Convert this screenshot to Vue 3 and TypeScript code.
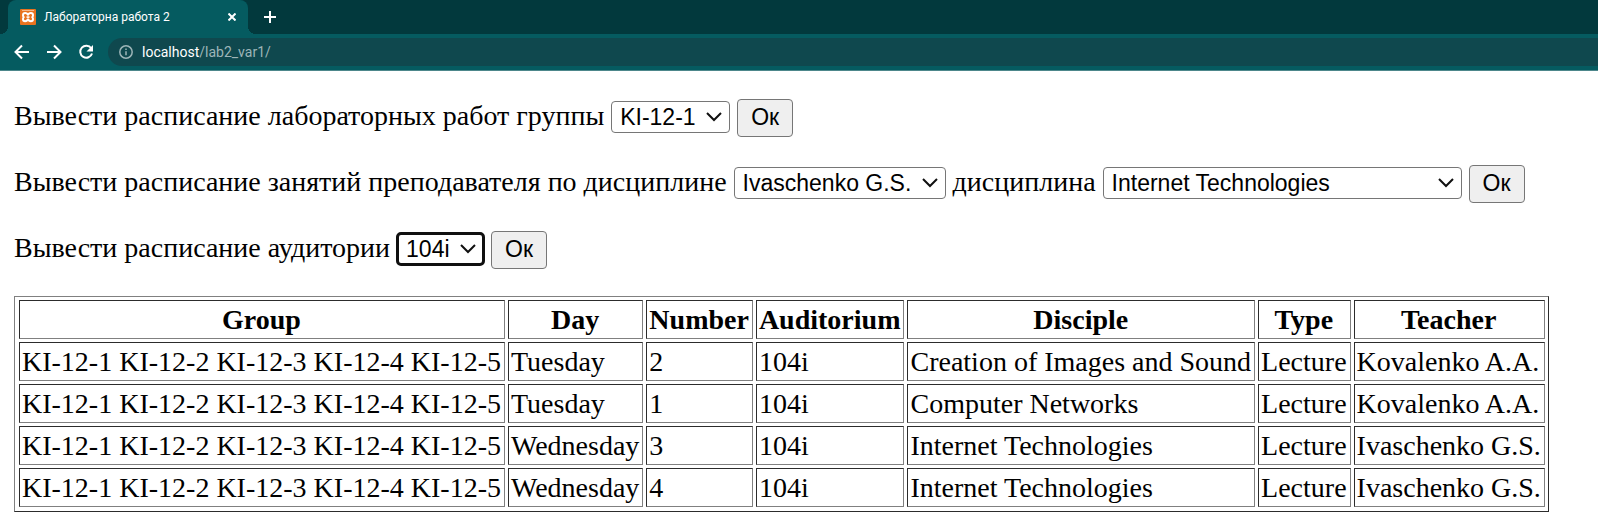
<script setup lang="ts">
import { ref } from 'vue'

interface Lesson {
  group: string
  day: string
  number: number
  auditorium: string
  disciple: string
  type: string
  teacher: string
}

const groups = ['KI-12-1', 'KI-12-2', 'KI-12-3', 'KI-12-4', 'KI-12-5']
const teachers = ['Ivaschenko G.S.', 'Kovalenko A.A.']
const disciplines = ['Internet Technologies', 'Computer Networks', 'Creation of Images and Sound']
const rooms = ['104i']

const group = ref(groups[0])
const teacher = ref(teachers[0])
const discipline = ref(disciplines[0])
const room = ref(rooms[0])

const columns = ['Group', 'Day', 'Number', 'Auditorium', 'Disciple', 'Type', 'Teacher']
const allGroups = groups.join(' ')

const lessons: Lesson[] = [
  { group: allGroups, day: 'Tuesday', number: 2, auditorium: '104i', disciple: 'Creation of Images and Sound', type: 'Lecture', teacher: 'Kovalenko A.A.' },
  { group: allGroups, day: 'Tuesday', number: 1, auditorium: '104i', disciple: 'Computer Networks', type: 'Lecture', teacher: 'Kovalenko A.A.' },
  { group: allGroups, day: 'Wednesday', number: 3, auditorium: '104i', disciple: 'Internet Technologies', type: 'Lecture', teacher: 'Ivaschenko G.S.' },
  { group: allGroups, day: 'Wednesday', number: 4, auditorium: '104i', disciple: 'Internet Technologies', type: 'Lecture', teacher: 'Ivaschenko G.S.' },
]
</script>

<template>
  <div class="browser">
    <header>
      <div class="tabs">
        <div class="tab">
          <svg class="favicon" viewBox="0 0 16 16" aria-hidden="true">
            <rect width="16" height="16" rx="1" fill="#e8731f" />
            <path d="M2 1.500h12" stroke="#f6b98a" stroke-width="1" />
            <path
              d="M8 5.800C7.200 4.600 6.300 4 5.200 4 3.800 4 3 5 3 6.200c0 .8.300 1.400.8 1.900-.5.500-.8 1.100-.8 1.900C3 11.200 3.800 12.200 5.200 12.200c1.100 0 2-.6 2.800-1.800.8 1.200 1.700 1.800 2.800 1.800 1.400 0 2.200-1 2.200-2.200 0-.8-.3-1.400-.8-1.900.5-.5.8-1.100.8-1.900C13 5 12.200 4 10.800 4 9.700 4 8.800 4.600 8 5.800Z"
              fill="none" stroke="#fff" stroke-width="2" stroke-linejoin="round" />
            <path d="M6.500 8.100h3" stroke="#fff" stroke-width="1.600" />
          </svg>
          <span class="title">Лабораторна работа 2</span>
          <button class="icon close" type="button" aria-label="Close tab">
            <svg viewBox="0 0 8 8"><path d="M.5.5l7 7M7.500.5l-7 7" /></svg>
          </button>
        </div>
        <button class="icon add" type="button" aria-label="New tab">
          <svg viewBox="0 0 12 12"><path d="M6 0v12M0 6h12" /></svg>
        </button>
      </div>
      <div class="toolbar">
        <nav class="history">
          <button class="icon" type="button" aria-label="Back">
            <svg viewBox="0 0 16 16"><path d="M15 8H2M8 1.500 1.500 8 8 14.500" /></svg>
          </button>
          <button class="icon" type="button" aria-label="Forward">
            <svg viewBox="0 0 16 16"><path d="M1 8h13M8 1.500 14.500 8 8 14.500" /></svg>
          </button>
          <button class="icon" type="button" aria-label="Reload">
            <svg viewBox="0 0 16 16">
              <path d="M13.200 4.300A6 6 0 1 0 14 9.500" />
              <path class="solid" d="M15 1v6.500H8.500Z" />
            </svg>
          </button>
        </nav>
        <div class="omnibox">
          <svg class="info" viewBox="0 0 14 14" aria-hidden="true">
            <circle cx="7" cy="7" r="6.200" />
            <path d="M7 6.200v4M7 3.500v1.500" />
          </svg>
          <a href="#">localhost<span>/lab2_var1/</span></a>
        </div>
      </div>
    </header>

    <main>
      <form @submit.prevent>
        <label for="group">Вывести расписание лабораторных работ группы</label>
        <span class="pick">
          <select id="group" v-model="group">
            <option v-for="g in groups" :key="g">{{ g }}</option>
          </select>
          <svg viewBox="0 0 16 10" aria-hidden="true"><path d="M1 1l7 7 7-7" /></svg>
        </span>
        <button class="ok" type="submit">Ок</button>
      </form>

      <form @submit.prevent>
        <label for="teacher">Вывести расписание занятий преподавателя по дисциплине</label>
        <span class="pick">
          <select id="teacher" v-model="teacher">
            <option v-for="t in teachers" :key="t">{{ t }}</option>
          </select>
          <svg viewBox="0 0 16 10" aria-hidden="true"><path d="M1 1l7 7 7-7" /></svg>
        </span>
        <label for="discipline">дисциплина</label>
        <span class="pick wide">
          <select id="discipline" v-model="discipline">
            <option v-for="d in disciplines" :key="d">{{ d }}</option>
          </select>
          <svg viewBox="0 0 16 10" aria-hidden="true"><path d="M1 1l7 7 7-7" /></svg>
        </span>
        <button class="ok" type="submit">Ок</button>
      </form>

      <form @submit.prevent>
        <label for="room">Вывести расписание аудитории</label>
        <span class="pick active">
          <select id="room" v-model="room">
            <option v-for="r in rooms" :key="r">{{ r }}</option>
          </select>
          <svg viewBox="0 0 16 10" aria-hidden="true"><path d="M1 1l7 7 7-7" /></svg>
        </span>
        <button class="ok" type="submit">Ок</button>
      </form>

      <table>
        <thead>
          <tr>
            <th v-for="c in columns" :key="c" scope="col">{{ c }}</th>
          </tr>
        </thead>
        <tbody>
          <tr v-for="(l, i) in lessons" :key="i">
            <td>{{ l.group }}</td>
            <td>{{ l.day }}</td>
            <td>{{ l.number }}</td>
            <td>{{ l.auditorium }}</td>
            <td>{{ l.disciple }}</td>
            <td>{{ l.type }}</td>
            <td>{{ l.teacher }}</td>
          </tr>
        </tbody>
      </table>
    </main>
  </div>
</template>

<style>
body {
  margin: 0;
  background: #fff;
}
</style>

<style scoped>
.browser {
  font-family: "Liberation Serif", "Times New Roman", serif;
  color: #000;
}

header {
  font-family: Roboto, "Open Sans", sans-serif;
  color: #fff;
}

.tabs {
  display: flex;
  align-items: center;
  height: 34px;
  padding-left: 8px;
  background: #02393d;
}

.tab {
  position: relative;
  display: flex;
  align-items: center;
  box-sizing: border-box;
  width: 240px;
  height: 34px;
  padding: 0 12px;
  border-radius: 8px 8px 0 0;
  background: #055b60;
}

.tab::before,
.tab::after {
  content: "";
  position: absolute;
  bottom: 0;
  width: 8px;
  height: 8px;
}

.tab::before {
  right: 100%;
  background: radial-gradient(circle at 0 0, transparent 8px, #055b60 8px);
}

.tab::after {
  left: 100%;
  background: radial-gradient(circle at 100% 0, transparent 8px, #055b60 8px);
}

.favicon {
  width: 16px;
  height: 16px;
}

.title {
  flex: 1;
  margin-left: 8px;
  font-size: 12px;
  line-height: 16px;
  white-space: nowrap;
}

.icon {
  display: flex;
  padding: 0;
  border: 0;
  background: none;
}

.icon svg {
  width: 16px;
  height: 16px;
  fill: none;
  stroke: #fff;
  stroke-width: 2;
}

.icon .solid {
  fill: #fff;
  stroke: none;
}

.close svg {
  width: 8px;
  height: 8px;
}

.add {
  margin-left: 16px;
}

.add svg {
  width: 12px;
  height: 12px;
}

.toolbar {
  display: flex;
  align-items: center;
  gap: 14px;
  height: 36px;
  padding-left: 14px;
  border-bottom: 1px solid #4d878b;
  background: #055b60;
}

.history {
  display: flex;
  gap: 16px;
}

.omnibox {
  display: flex;
  flex: 1;
  align-items: center;
  gap: 9px;
  height: 28px;
  padding-left: 11px;
  border-radius: 14px 0 0 14px;
  background: #0f484e;
  font-size: 14px;
  line-height: 20px;
}

.omnibox a {
  color: #fff;
  text-decoration: none;
}

.omnibox span {
  color: #9db5b8;
}

.info {
  width: 14px;
  height: 14px;
  fill: none;
  stroke: #9db5b8;
  stroke-width: 1.500;
}

main {
  display: flex;
  flex-direction: column;
  align-items: flex-start;
  padding: 28px 14px 16px;
  font-size: 28px;
  line-height: 33px;
}

form {
  display: flex;
  align-items: baseline;
  gap: 7px;
  white-space: nowrap;
}

form + form {
  margin-top: 28px;
}

.pick {
  position: relative;
  display: flex;
  align-items: center;
}

.pick select {
  box-sizing: border-box;
  width: 100%;
  height: 32px;
  padding: 0 33px 0 8px;
  border: 1px solid #767676;
  border-radius: 4px;
  background: #fff;
  color: #000;
  font: 23px/28px "Liberation Sans", Arial, sans-serif;
  appearance: none;
}

.pick svg {
  position: absolute;
  right: 8px;
  width: 16px;
  height: 10px;
  fill: none;
  stroke: #101010;
  stroke-width: 2;
  pointer-events: none;
}

.wide {
  width: 359px;
}

.active select {
  outline: 3px solid #101010;
  outline-offset: -2px;
}

.ok {
  box-sizing: border-box;
  height: 38px;
  padding: 0 13px 2px;
  border: 1px solid #767676;
  border-radius: 4px;
  background: #efefef;
  color: #000;
  font: 23px/28px "Liberation Sans", Arial, sans-serif;
}

table {
  margin-top: 27px;
  padding: 0 0 1px 1px;
  border: 1px solid;
  border-color: #808080 #2c2c2c #2c2c2c #808080;
  border-spacing: 3px;
}

th,
td {
  padding: 2px 3px 2px 2px;
  border: 1px solid;
  border-color: #2c2c2c #808080 #808080 #2c2c2c;
  text-align: left;
  white-space: nowrap;
}

th {
  text-align: center;
}
</style>
